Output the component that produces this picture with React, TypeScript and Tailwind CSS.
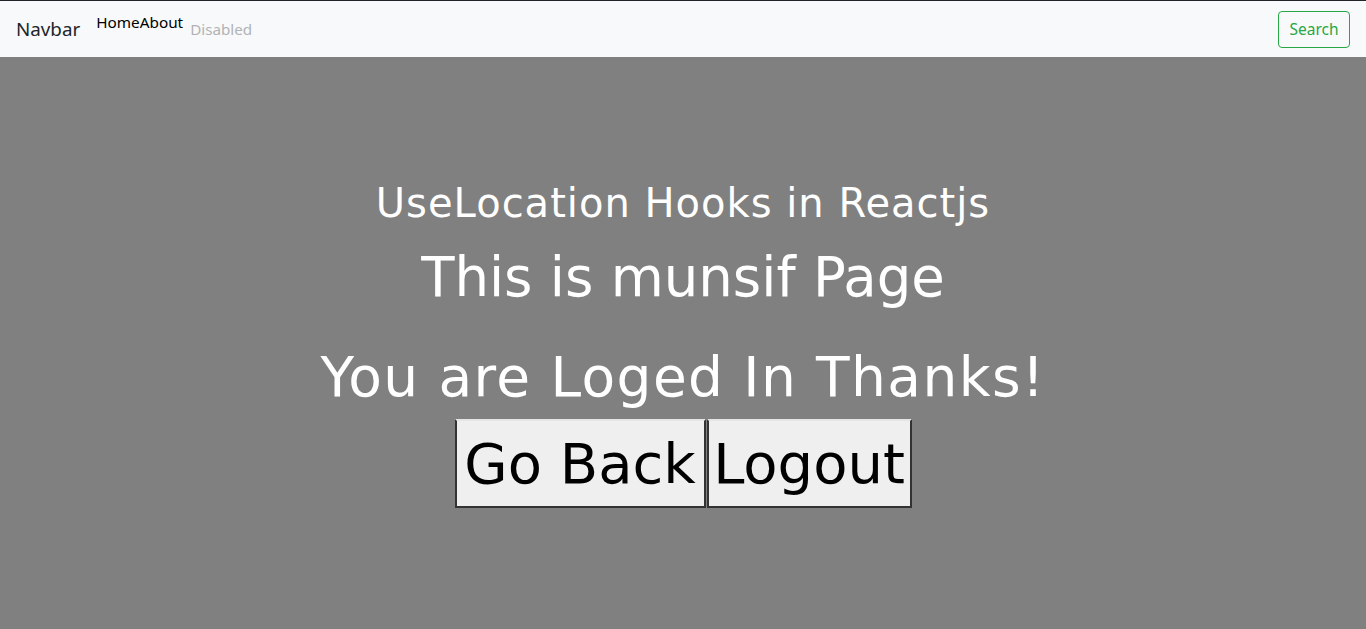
export default function App() {
  const gothic = { fontFamily: '"DejaVu Sans", "Liberation Sans", sans-serif' };
  return (
    <div className="min-h-[629px] w-full flex flex-col bg-[#808080]">
      <div className="h-px bg-[#212529]" />
      <nav className="h-[56px] bg-[#f8f9fa] flex items-center px-4 font-['Segoe_UI','Noto_Sans','Liberation_Sans',sans-serif]">
        <span className="text-[18.8px] text-[#212529] mr-4 leading-none">Navbar</span>
        <div className="flex items-start self-stretch pt-[12px]">
          <span className="text-[15.3px] text-black leading-tight">Home</span>
          <span className="text-[15.3px] text-black leading-tight">About</span>
        </div>
        <span className="ml-[7px] mt-[2px] text-[15.2px] text-[#b0b3b5] leading-none">Disabled</span>
        <button className="ml-auto mt-px h-[37px] w-[72px] border border-[#28a745] rounded text-[#28a745] text-[15.5px] leading-none">
          Search
        </button>
      </nav>
      <main className="flex-1 flex flex-col items-center pt-[122px] text-white text-center" style={gothic}>
        <h3 className="text-[40px] leading-[48px] tracking-[1px]">UseLocation Hooks in Reactjs</h3>
        <h1 className="mt-[14px] text-[54.5px] leading-[72px]">This is munsif Page</h1>
        <h1 className="mt-[28px] text-[55px] leading-[72px] tracking-[1.4px]">You are Loged In Thanks!</h1>
        <div className="mt-[6px] flex gap-px">
          <button className="h-[89px] w-[251px] bg-[#efefef] text-black text-[56px] leading-none border-2 border-t-[#e5e5e5] border-l-[#333] border-b-[#333] border-r-[#333]">Go Back</button>
          <button className="h-[89px] w-[205px] bg-[#efefef] text-black text-[56px] leading-none border-2 border-t-[#e5e5e5] border-l-[#333] border-b-[#333] border-r-[#333]">Logout</button>
        </div>
      </main>
    </div>
  );
}
